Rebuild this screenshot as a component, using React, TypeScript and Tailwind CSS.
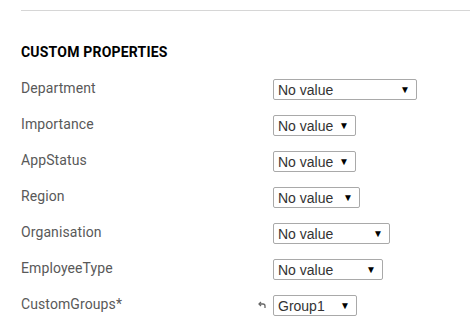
import React from 'react'

type Prop = { label: string; value: string; width: string; reset?: boolean }

const props: Prop[] = [
  { label: 'Department', value: 'No value', width: 'w-[144px]' },
  { label: 'Importance', value: 'No value', width: 'w-[83px]' },
  { label: 'AppStatus', value: 'No value', width: 'w-[83px]' },
  { label: 'Region', value: 'No value', width: 'w-[87px]' },
  { label: 'Organisation', value: 'No value', width: 'w-[117px]' },
  { label: 'EmployeeType', value: 'No value', width: 'w-[110px]' },
  { label: 'CustomGroups*', value: 'Group1', width: 'w-[84px]', reset: true },
]

function FakeSelect({ value, width }: { value: string; width: string }) {
  return (
    <div
      className={`${width} h-[21px] flex items-center justify-between border border-[#a9a9a9] rounded-[2px] bg-white pl-[4px] pr-[6px] text-[14px] text-[#333] font-['Liberation_Sans',Arial,sans-serif]`}
    >
      <span className="leading-none">{value}</span>
      <span className="text-[10px] leading-none text-black">▼</span>
    </div>
  )
}

export default function App() {
  return (
    <div className="w-[470px] h-[328px] bg-white pl-[21px] pt-[10px] font-['Roboto',sans-serif] overflow-hidden">
      <div className="border-t border-[#d6d6d6]" />
      <h3 className="mt-[33px] text-[14px] font-bold text-black tracking-[0.2px] leading-[16px]">
        CUSTOM PROPERTIES
      </h3>
      <div className="mt-[19px] flex flex-col gap-[15px]">
        {props.map((p) => (
          <div key={p.label} className="flex items-start h-[21px]">
            <span className="w-[252px] pt-[2px] text-[14px] text-[#595959] leading-[14px] tracking-[0.1px]">
              {p.label}
            </span>
            <div className="relative">
              {p.reset && (
                <svg
                  className="absolute left-[-15px] top-[6px]"
                  width="8"
                  height="7"
                  viewBox="0 0 8 7"
                  fill="none"
                  stroke="#666"
                  strokeWidth="1.3"
                >
                  <path d="M1 3 H5 a2 2 0 0 1 2 2 V7" />
                  <path d="M3 1 L1 3 L3 5" />
                </svg>
              )}
              <FakeSelect value={p.value} width={p.width} />
            </div>
          </div>
        ))}
      </div>
    </div>
  )
}
